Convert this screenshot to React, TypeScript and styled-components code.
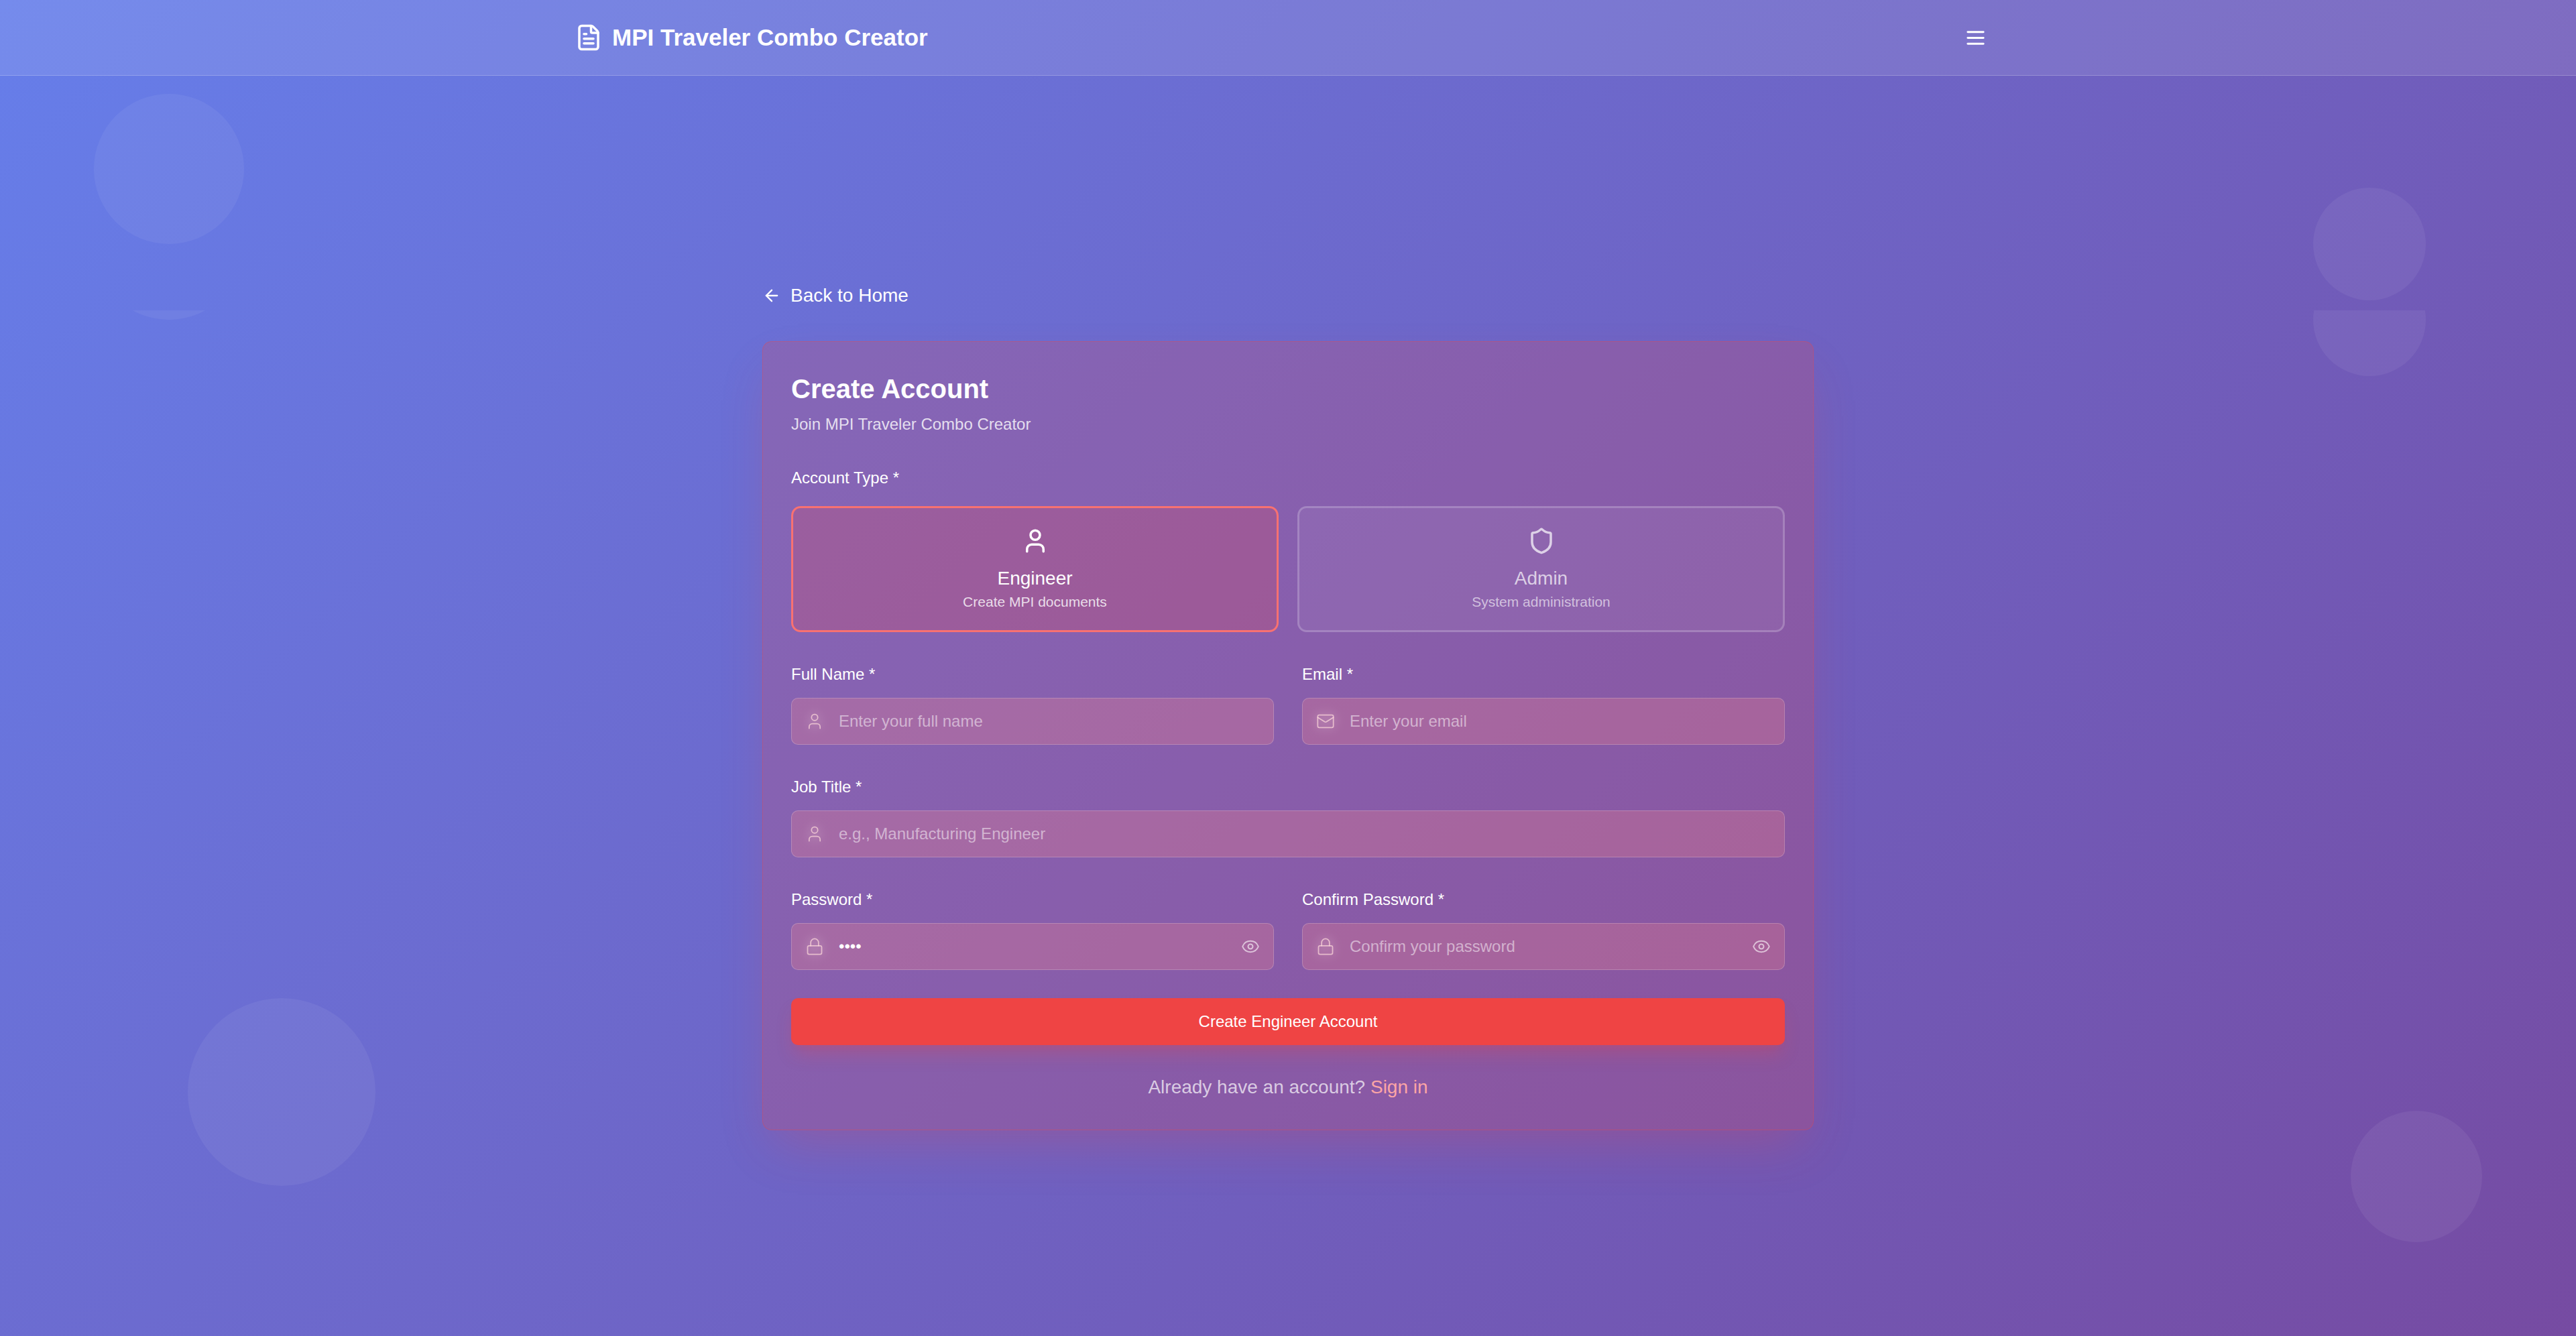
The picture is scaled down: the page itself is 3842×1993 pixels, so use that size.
import React, { useState } from "react";
import styled, { createGlobalStyle, css } from "styled-components";
import { ArrowLeft, Eye, FileText, Lock, Mail, Shield, User } from "lucide-react";

const GlobalStyle = createGlobalStyle`
  *, *::before, *::after { box-sizing: border-box; }
  body {
    margin: 0;
    font-family: "Liberation Sans", Arial, sans-serif;
    font-size: 28px;
    line-height: 42px;
    color: #fff;
  }
  button, input { font: inherit; color: inherit; }
`;

const Page = styled.div`
  position: relative;
  display: flex;
  flex-direction: column;
  min-height: 100vh;
  overflow: hidden;
  background: linear-gradient(135deg, #667eea 0%, #764ba2 100%);
`;

const Backdrop = styled.div<{ $top: number }>`
  position: absolute;
  inset: ${(p) => p.$top}px 0 0;
  overflow: hidden;
  pointer-events: none;
`;

const Bubble = styled.span<{
  $size: number;
  $top?: number;
  $right?: number;
  $bottom?: number;
  $left?: number;
}>`
  position: absolute;
  width: ${(p) => p.$size}px;
  height: ${(p) => p.$size}px;
  ${(p) => p.$top !== undefined && `top: ${p.$top}px;`}
  ${(p) => p.$right !== undefined && `right: ${p.$right}px;`}
  ${(p) => p.$bottom !== undefined && `bottom: ${p.$bottom}px;`}
  ${(p) => p.$left !== undefined && `left: ${p.$left}px;`}
  border-radius: 50%;
  background: rgba(255, 255, 255, 0.06);
`;

const Header = styled.header`
  position: relative;
  background: rgba(255, 255, 255, 0.1);
  border-bottom: 1px solid rgba(255, 255, 255, 0.2);
`;

const HeaderInner = styled.div`
  display: flex;
  align-items: center;
  justify-content: space-between;
  max-width: 2240px;
  height: 112px;
  margin: 0 auto;
  padding: 0 56px;
`;

const Brand = styled.a`
  display: flex;
  align-items: center;
  gap: 14px;
  color: #fff;
  font-size: 35px;
  font-weight: 700;
  text-decoration: none;
`;

const MenuButton = styled.button`
  display: flex;
  padding: 21px;
  border: 0;
  background: none;
  cursor: pointer;
`;

const Main = styled.main`
  position: relative;
  display: flex;
  flex: 1;
  flex-direction: column;
  align-items: center;
  justify-content: center;
  padding: 56px 28px;
`;

const Column = styled.div`
  width: 100%;
  max-width: 1568px;
`;

const BackLink = styled.a`
  display: flex;
  align-items: center;
  gap: 14px;
  width: fit-content;
  margin-bottom: 47px;
  color: #fff;
  text-decoration: none;
`;

const Card = styled.section`
  padding: 42px;
  border: 1px solid rgba(239, 68, 68, 0.35);
  border-radius: 14px;
  background: rgba(239, 68, 68, 0.2);
  box-shadow: 0 35px 70px -18px rgba(239, 68, 68, 0.25);
`;

const Title = styled.h1`
  margin: 0 0 7px;
  font-size: 40px;
  line-height: 56px;
`;

const Subtitle = styled.p`
  margin: 0 0 42px;
  color: rgba(255, 255, 255, 0.8);
  font-size: 24px;
  line-height: 35px;
`;

const Form = styled.form`
  display: flex;
  flex-direction: column;
  gap: 42px;
`;

const Roles = styled.fieldset`
  margin: 0;
  padding: 0;
  border: 0;
`;

const Legend = styled.legend`
  margin-bottom: 21px;
  padding: 0;
  font-size: 24px;
`;

const RoleGrid = styled.div`
  display: grid;
  grid-template-columns: 1fr 1fr;
  gap: 28px;
`;

const RoleName = styled.span`
  margin-top: 14px;
`;

const RoleNote = styled.span<{ $active: boolean }>`
  color: rgba(255, 255, 255, ${(p) => (p.$active ? 0.8 : 0.6)});
  font-size: 21px;
  line-height: 28px;
`;

const RoleButton = styled.button<{ $active: boolean }>`
  display: flex;
  flex-direction: column;
  align-items: center;
  padding: 28px;
  border: 3px solid rgba(255, 255, 255, 0.2);
  border-radius: 14px;
  background: rgba(255, 255, 255, 0.05);
  color: rgba(255, 255, 255, 0.7);
  cursor: pointer;
  ${(p) =>
    p.$active &&
    css`
      border-color: #f87171;
      background: rgba(239, 68, 68, 0.2);
      color: #fff;
    `}
`;

const Row = styled.div`
  display: grid;
  grid-template-columns: repeat(auto-fit, minmax(400px, 1fr));
  gap: 42px;
`;

const FieldBox = styled.div`
  display: flex;
  flex-direction: column;
  gap: 14px;
`;

const Label = styled.label`
  font-size: 24px;
`;

const Control = styled.div`
  position: relative;
  display: flex;
`;

const Glyph = styled.span`
  position: absolute;
  top: 21px;
  left: 21px;
  display: flex;
  color: rgba(255, 220, 220, 0.7);
  pointer-events: none;
  filter: drop-shadow(0 0 8px rgba(255, 255, 255, 0.8));
`;

const Input = styled.input`
  width: 100%;
  height: 70px;
  padding: 0 70px;
  border: 1px solid rgba(255, 255, 255, 0.2);
  border-radius: 10px;
  outline: 0;
  background: rgba(254, 135, 135, 0.25);
  color: #fff;
  font-size: 24px;
  &::placeholder {
    color: rgba(255, 255, 255, 0.5);
    opacity: 1;
  }
`;

const EyeButton = styled.button`
  position: absolute;
  top: 21px;
  right: 21px;
  display: flex;
  padding: 0;
  border: 0;
  background: none;
  color: rgba(255, 255, 255, 0.6);
  cursor: pointer;
`;

const Submit = styled.button`
  height: 70px;
  border: 0;
  border-radius: 10px;
  background: #ef4444;
  box-shadow: 0 18px 26px -5px rgba(239, 68, 68, 0.25), 0 7px 10px -7px rgba(239, 68, 68, 0.25);
  font-size: 24px;
  cursor: pointer;
`;

const SignIn = styled.p`
  margin: 42px 0 0;
  color: rgba(255, 255, 255, 0.7);
  text-align: center;
  a {
    color: #fca5a5;
    text-decoration: none;
  }
`;

type IconType = React.ComponentType<{ size?: number; strokeWidth?: number }>;

interface FieldProps {
  id: string;
  label: string;
  icon: IconType;
  type?: string;
  placeholder: string;
  initial?: string;
}

function Field({ id, label, icon: Icon, type = "text", placeholder, initial = "" }: FieldProps) {
  const [value, setValue] = useState(initial);
  const [shown, setShown] = useState(false);
  const secret = type === "password";
  return (
    <FieldBox>
      <Label htmlFor={id}>{label} *</Label>
      <Control>
        <Input
          id={id}
          type={secret && shown ? "text" : type}
          placeholder={placeholder}
          value={value}
          onChange={(e) => setValue(e.target.value)}
        />
        <Glyph>
          <Icon size={28} strokeWidth={1.5} />
        </Glyph>
        {secret && (
          <EyeButton type="button" aria-label="Show password" onClick={() => setShown(!shown)}>
            <Eye size={28} strokeWidth={1.75} />
          </EyeButton>
        )}
      </Control>
    </FieldBox>
  );
}

const ROLES: { name: string; note: string; icon: IconType }[] = [
  { name: "Engineer", note: "Create MPI documents", icon: User },
  { name: "Admin", note: "System administration", icon: Shield },
];

export default function App() {
  const [role, setRole] = useState("Engineer");
  return (
    <Page>
      <GlobalStyle />
      <Backdrop $top={0}>
        <Bubble $size={224} $top={140} $left={140} />
        <Bubble $size={168} $top={280} $right={224} />
        <Bubble $size={280} $bottom={224} $left={280} />
        <Bubble $size={196} $bottom={140} $right={140} />
      </Backdrop>
      <Backdrop $top={463}>
        <Bubble $size={224} $top={-210} $left={140} />
        <Bubble $size={168} $top={-70} $right={224} />
      </Backdrop>
      <Header>
        <HeaderInner>
          <Brand href="#">
            <FileText size={42} />
            MPI Traveler Combo Creator
          </Brand>
          <MenuButton type="button" aria-label="Menu">
            <svg width="35" height="35" viewBox="0 0 24 24" fill="none" stroke="currentColor" strokeWidth="2" strokeLinecap="round">
              <path d="M4 6h16M4 12h16M4 18h16" />
            </svg>
          </MenuButton>
        </HeaderInner>
      </Header>
      <Main>
        <Column>
          <BackLink href="#">
            <ArrowLeft size={28} />
            Back to Home
          </BackLink>
          <Card>
            <Title>Create Account</Title>
            <Subtitle>Join MPI Traveler Combo Creator</Subtitle>
            <Form onSubmit={(e) => e.preventDefault()}>
              <Roles>
                <Legend>Account Type *</Legend>
                <RoleGrid>
                  {ROLES.map(({ name, note, icon: Icon }) => (
                    <RoleButton
                      key={name}
                      type="button"
                      $active={role === name}
                      aria-pressed={role === name}
                      onClick={() => setRole(name)}
                    >
                      <Icon size={42} />
                      <RoleName>{name}</RoleName>
                      <RoleNote $active={role === name}>{note}</RoleNote>
                    </RoleButton>
                  ))}
                </RoleGrid>
              </Roles>
              <Row>
                <Field id="name" label="Full Name" icon={User} placeholder="Enter your full name" />
                <Field id="email" label="Email" icon={Mail} type="email" placeholder="Enter your email" />
              </Row>
              <Field id="job" label="Job Title" icon={User} placeholder="e.g., Manufacturing Engineer" />
              <Row>
                <Field id="password" label="Password" icon={Lock} type="password" placeholder="Create a password" initial="1234" />
                <Field id="confirm" label="Confirm Password" icon={Lock} type="password" placeholder="Confirm your password" />
              </Row>
              <Submit type="submit">Create {role} Account</Submit>
            </Form>
            <SignIn>
              Already have an account? <a href="#">Sign in</a>
            </SignIn>
          </Card>
        </Column>
      </Main>
    </Page>
  );
}
